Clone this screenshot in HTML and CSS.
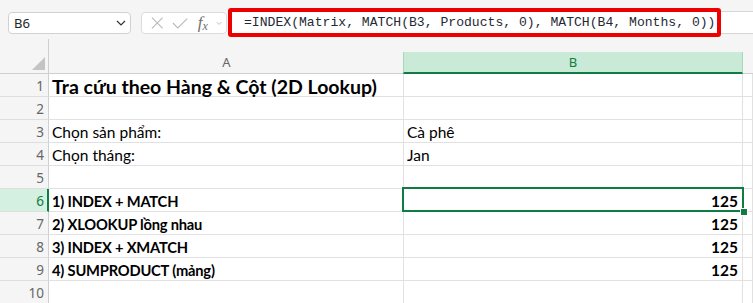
FILE: index.html
```html
<!DOCTYPE html>
<html lang="vi">
<head>
    <meta charset="UTF-8">
    <title>2D Lookup</title>
    <link rel="stylesheet" href="styles.css">
</head>
<body>
    <div class="toolbar">
        <div class="name-box">
            <span>B6</span>
            <svg class="chevron" width="10" height="6" viewBox="0 0 10 6"><path d="M1 1 L5 5 L9 1" fill="none" stroke="#333" stroke-width="1.2"/></svg>
        </div>
        <div class="fx-box">
            <svg width="14" height="14" viewBox="0 0 14 14"><path d="M1 1 L13 13 M13 1 L1 13" stroke="#b9b9b9" stroke-width="1.2"/></svg>
            <svg width="18" height="14" viewBox="0 0 18 14"><path d="M1 7 L6.5 12.5 L17 2" fill="none" stroke="#b9b9b9" stroke-width="1.2"/></svg>
            <span class="fx">f<sub>x</sub></span>
            <svg width="7" height="5" viewBox="0 0 7 5"><path d="M1 1 L3.5 3.5 L6 1" fill="none" stroke="#b9b9b9" stroke-width="1"/></svg>
        </div>
        <div class="formula-input">
            <div class="formula-highlight">=INDEX(Matrix, MATCH(B3, Products, 0), MATCH(B4, Months, 0))</div>
        </div>
    </div>

    <div class="sheet">
        <div class="spacer corner-gap"></div>
        <div class="spacer"></div>
        <div class="spacer"></div>
        <div class="spacer"></div>

        <div class="col-head corner"><span class="corner-tri"></span></div>
        <div class="col-head">A</div>
        <div class="col-head active">B</div>
        <div class="col-head"></div>

        <div class="row-head">1</div>
        <div class="cell title">Tra cứu theo Hàng &amp; Cột (2D Lookup)</div>
        <div class="cell"></div>
        <div class="cell"></div>

        <div class="row-head">2</div>
        <div class="cell"></div>
        <div class="cell"></div>
        <div class="cell"></div>

        <div class="row-head">3</div>
        <div class="cell">Chọn sản phẩm:</div>
        <div class="cell">Cà phê</div>
        <div class="cell"></div>

        <div class="row-head">4</div>
        <div class="cell">Chọn tháng:</div>
        <div class="cell">Jan</div>
        <div class="cell"></div>

        <div class="row-head">5</div>
        <div class="cell"></div>
        <div class="cell"></div>
        <div class="cell"></div>

        <div class="row-head active">6</div>
        <div class="cell bold">1) INDEX + MATCH</div>
        <div class="cell bold num selected">125<span class="fill-handle"></span></div>
        <div class="cell"></div>

        <div class="row-head">7</div>
        <div class="cell bold">2) XLOOKUP lồng nhau</div>
        <div class="cell bold num">125</div>
        <div class="cell"></div>

        <div class="row-head">8</div>
        <div class="cell bold">3) INDEX + XMATCH</div>
        <div class="cell bold num">125</div>
        <div class="cell"></div>

        <div class="row-head">9</div>
        <div class="cell bold">4) SUMPRODUCT (mảng)</div>
        <div class="cell bold num">125</div>
        <div class="cell"></div>

        <div class="row-head">10</div>
        <div class="cell"></div>
        <div class="cell"></div>
        <div class="cell"></div>
    </div>
</body>
</html>
```

FILE: styles.css
```css
:root {
    --chrome-bg: #f5f5f5;
    --grid-line: #e1e1e1;
    --head-line: #d0d0d0;
    --excel-green: #107c41;
    --head-green: #caead8;
}

body {
    margin: 0;
    background: #ffffff;
    font-family: 'Lato', 'Noto Sans', sans-serif;
    overflow: hidden;
}

.toolbar {
    height: 39px;
    background: var(--chrome-bg);
    display: flex;
    align-items: flex-start;
    padding: 12px 0 0 8px;
    box-sizing: border-box;
}

.name-box {
    width: 123px;
    height: 22px;
    box-sizing: border-box;
    background: #ffffff;
    border: 1px solid #d1d1d1;
    border-radius: 4px;
    display: flex;
    align-items: center;
    justify-content: space-between;
    padding: 0 4px 0 5px;
    font-family: 'Noto Sans', sans-serif;
    font-size: 13px;
    color: #242424;
}

.fx-box {
    width: 86px;
    height: 22px;
    margin-left: 10px;
    box-sizing: border-box;
    background: #ffffff;
    border: 1px solid #dcdcdc;
    border-radius: 4px;
    display: flex;
    align-items: center;
    gap: 8px;
    padding: 0 4px 0 9px;
}

.fx {
    font-family: 'Liberation Serif', serif;
    font-style: italic;
    font-size: 17px;
    color: #707070;
    line-height: 1;
    margin-left: 2px;
}

.fx sub {
    font-size: 12px;
    vertical-align: -2px;
}

.formula-input {
    flex: 1;
    height: 23px;
    margin-top: -1px;
    margin-left: 1px;
    box-sizing: border-box;
    background: #ffffff;
    border: 1px solid #d6d6d6;
    border-right: none;
    display: flex;
    align-items: center;
}

.formula-highlight {
    width: 493px;
    height: 29px;
    margin-left: -1px;
    flex-shrink: 0;
    box-sizing: border-box;
    border: 4px solid #ee0000;
    border-radius: 3px;
    background: #ffffff;
    font-family: 'Liberation Mono', monospace;
    font-size: 13.1px;
    color: #1f2a36;
    line-height: 21px;
    padding-left: 12px;
    white-space: nowrap;
}

.sheet {
    display: grid;
    grid-template-columns: 49px 355px 339px 1fr;
    grid-template-rows: 13px 22px repeat(10, 23px);
}

.spacer {
    background: var(--chrome-bg);
}

.corner-gap {
    border-right: 1px solid #cfcfcf;
}

.col-head {
    background: var(--chrome-bg);
    border-bottom: 1px solid #cfcfcf;
    font-family: 'Noto Sans', sans-serif;
    font-size: 13px;
    color: #666666;
    text-align: center;
    line-height: 21px;
    position: relative;
}

.col-head.corner {
    border-right: 1px solid #cfcfcf;
}

.corner-tri {
    position: absolute;
    right: 3px;
    bottom: 3px;
    width: 0;
    height: 0;
    border-left: 13px solid transparent;
    border-bottom: 13px solid #c4c4c4;
}

.col-head.active {
    background: var(--head-green);
    color: var(--excel-green);
    border-bottom: 2px solid var(--excel-green);
    border-left: 1px solid #a8d8bc;
    border-right: 1px solid #a8d8bc;
    line-height: 20px;
    margin-left: -1px;
}

.row-head {
    background: var(--chrome-bg);
    border-right: 1px solid #cfcfcf;
    border-bottom: 1px solid #dedede;
    font-family: 'Noto Sans', sans-serif;
    font-size: 13.5px;
    color: #666666;
    text-align: right;
    padding-right: 4px;
    line-height: 24px;
}

.row-head.active {
    background: #d3f0e0;
    color: var(--excel-green);
    border-right: 2px solid var(--excel-green);
    padding-right: 3px;
}

.cell {
    border-right: 1px solid var(--grid-line);
    border-bottom: 1px solid var(--grid-line);
    font-size: 15.5px;
    color: #000000;
    line-height: 25px;
    padding-left: 3px;
    white-space: nowrap;
    position: relative;
}

.cell.title {
    font-weight: bold;
    font-size: 19.5px;
    line-height: 25px;
}

.cell.bold {
    font-weight: bold;
    font-size: 14.7px;
    letter-spacing: -0.2px;
}

.cell.num {
    text-align: right;
    padding-right: 4px;
    font-size: 15.5px;
    letter-spacing: 0;
}

.cell.selected::after {
    content: "";
    position: absolute;
    left: -2px;
    top: -2px;
    right: -2px;
    bottom: -1px;
    border: 2px solid var(--excel-green);
}

.fill-handle {
    position: absolute;
    right: -6px;
    bottom: -5px;
    width: 6px;
    height: 6px;
    background: var(--excel-green);
    border: 1px solid #ffffff;
    z-index: 2;
}
```
